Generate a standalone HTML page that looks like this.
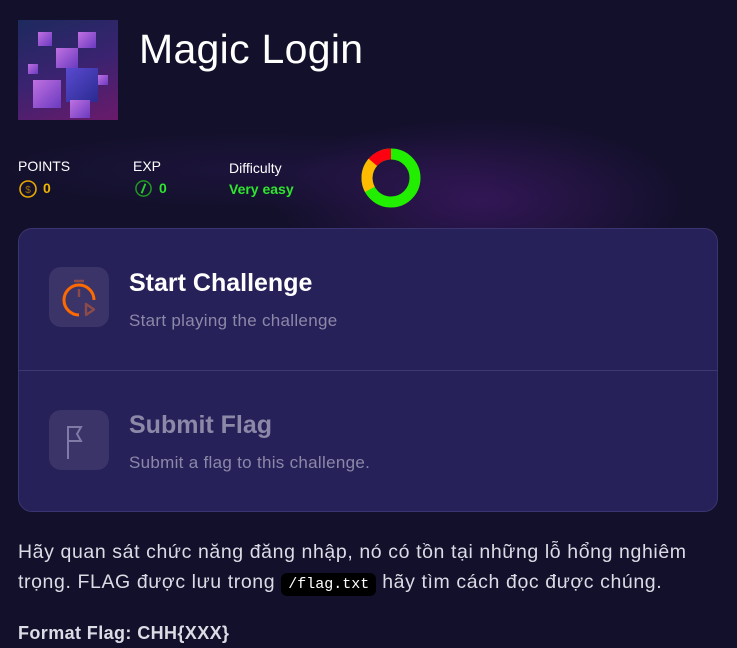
<!DOCTYPE html>
<html><head><meta charset="utf-8"><style>
*{margin:0;padding:0;box-sizing:border-box}
body{width:737px;height:648px;overflow:hidden;background:#12102a;font-family:"Liberation Sans",sans-serif;color:#fff;position:relative}
.glow{position:absolute;left:0;top:60px;width:737px;height:200px;background:radial-gradient(ellipse 300px 120px at 480px 140px,rgba(90,30,140,.45),transparent 70%),radial-gradient(ellipse 400px 60px at 250px 110px,rgba(60,30,110,.25),transparent 70%)}
.thumb{position:absolute;left:18px;top:20px;width:100px;height:100px;background:linear-gradient(160deg,#1d2a5e,#3a2370 50%,#6a1a6a);overflow:hidden}
.c{position:absolute;background:linear-gradient(135deg,#c070e0,#6a3ac0)}
h1{position:absolute;left:139px;top:26px;font-size:41px;font-weight:400;letter-spacing:.3px}
.lbl{position:absolute;font-size:14px}
.val{position:absolute;font-size:14px;font-weight:700}
.card{position:absolute;left:18px;top:228px;width:700px;height:284px;background:#272159;border:1px solid #3a3570;border-radius:14px}
.div{position:absolute;left:0;right:0;top:141px;height:1px;background:#3d3872}
.ib{position:absolute;left:30px;width:60px;height:60px;border-radius:12px;background:#3a3468}
.t{position:absolute;left:110px;font-size:25px;font-weight:700}
.s{position:absolute;left:110px;font-size:17px;color:#8c88a8;letter-spacing:.3px}
p{position:absolute;left:18px;font-size:19.5px;color:#dcdce6;line-height:30px;letter-spacing:.6px}
code{font-family:"Liberation Mono",monospace;font-size:15px;background:#000;color:#fff;border-radius:6px;padding:3px 7px;letter-spacing:0}
</style></head><body>
<div class="glow"></div>
<div class="thumb">
<div class="c" style="left:15px;top:60px;width:28px;height:28px"></div>
<div class="c" style="left:48px;top:48px;width:32px;height:34px;background:linear-gradient(135deg,#5a4ad0,#2a2a90)"></div>
<div class="c" style="left:38px;top:28px;width:22px;height:20px"></div>
<div class="c" style="left:60px;top:12px;width:18px;height:16px"></div>
<div class="c" style="left:20px;top:12px;width:14px;height:14px"></div>
<div class="c" style="left:10px;top:44px;width:10px;height:10px"></div>
<div class="c" style="left:52px;top:80px;width:20px;height:18px"></div>
<div class="c" style="left:80px;top:55px;width:10px;height:10px"></div>
</div>
<h1>Magic Login</h1>
<div class="lbl" style="left:18px;top:158px">POINTS</div>
<svg style="position:absolute;left:18px;top:179px" width="20" height="20" viewBox="0 0 20 20"><circle cx="10" cy="10" r="8" fill="none" stroke="#e8a800" stroke-width="1.6"/><text x="10" y="14" font-size="10" text-anchor="middle" fill="#a07000" font-family="Liberation Sans">$</text></svg>
<div class="val" style="left:43px;top:180px;color:#f0b400">0</div>
<div class="lbl" style="left:133px;top:158px">EXP</div>
<svg style="position:absolute;left:134px;top:179px" width="19" height="19" viewBox="0 0 20 20"><circle cx="10" cy="10" r="8" fill="none" stroke="#1f9a1f" stroke-width="1.6"/><path d="M12 5L8 15" stroke="#2ad02a" stroke-width="2"/></svg>
<div class="val" style="left:159px;top:180px;color:#2ee62e">0</div>
<div class="lbl" style="left:229px;top:160px">Difficulty</div>
<div class="val" style="left:229px;top:181px;color:#2ee62e">Very easy</div>
<svg style="position:absolute;left:361px;top:148px" width="60" height="60" viewBox="0 0 60 60"><g fill="none" stroke-width="11" transform="rotate(-90 30 30)"><circle cx="30" cy="30" r="24" stroke="#22ee00"/><circle cx="30" cy="30" r="24" stroke="#ffbb00" stroke-dasharray="0 101 30 200"/><circle cx="30" cy="30" r="24" stroke="#ff0010" stroke-dasharray="0 130 21 200"/></g></svg>
<div class="card">
<div class="ib" style="top:38px"><svg width="60" height="60" viewBox="0 0 60 60"><path d="M45 33 A15 15 0 1 0 30 48" fill="none" stroke="#ff6a00" stroke-width="3"/><path d="M25 14h10M30 22v8" stroke="#8c4a4a" stroke-width="2.4"/><path d="M37 37l8 5.5-8 5.5z" fill="none" stroke="#8c4a4a" stroke-width="2.4" stroke-linejoin="round"/></svg></div>
<div class="t" style="top:40px">Start Challenge</div>
<div class="s" style="top:82px">Start playing the challenge</div>
<div class="div"></div>
<div class="ib" style="top:181px"><svg width="60" height="60" viewBox="0 0 60 60"><path d="M19 16v33M19 17h13l-4 7 4 7h-13" fill="none" stroke="#7f7aa6" stroke-width="2"/></svg></div>
<div class="t" style="top:182px;color:#8c88a8">Submit Flag</div>
<div class="s" style="top:224px">Submit a flag to this challenge.</div>
</div>
<p style="top:537px;width:690px">Hãy quan sát chức năng đăng nhập, nó có tồn tại những lỗ hổng nghiêm trọng. FLAG được lưu trong <code>/flag.txt</code> hãy tìm cách đọc được chúng.</p>
<p style="top:618px;font-weight:700;font-size:18px;letter-spacing:.4px">Format Flag: CHH{XXX}</p>
</body></html>
